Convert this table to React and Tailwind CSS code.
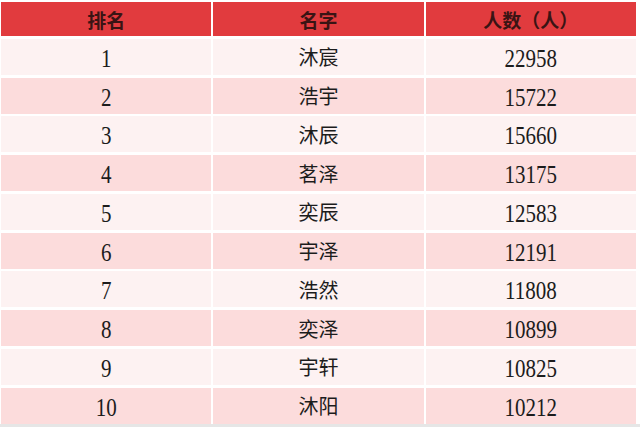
import React from 'react';

const rows = [
    ['1', '沐宸', '22958'],
    ['2', '浩宇', '15722'],
    ['3', '沐辰', '15660'],
    ['4', '茗泽', '13175'],
    ['5', '奕辰', '12583'],
    ['6', '宇泽', '12191'],
    ['7', '浩然', '11808'],
    ['8', '奕泽', '10899'],
    ['9', '宇轩', '10825'],
    ['10', '沐阳', '10212'],
];

const font = { fontFamily: '"Liberation Serif", "Noto Sans CJK SC", serif' };

const Num = ({ v }) => (
    <span className="inline-block text-[21px] leading-none scale-y-[1.22] pt-[3px]">{v}</span>
);

const App = () => {
    return (
        <div className="w-[640px] h-[427px] bg-white overflow-hidden flex flex-col">
            <div className="pt-[2px] pl-[1px] pr-[4px] flex flex-col gap-[2.75px]" style={font}>
                <div className="grid grid-cols-3 gap-[2px] h-[34px]">
                    {['排名', '名字', '人数（人）'].map((h) => (
                        <div key={h} className="bg-[#e13b3e] flex items-center justify-center pt-[4px] text-[19px] leading-none font-bold text-[#3a1414]">
                            {h}
                        </div>
                    ))}
                </div>
                {rows.map((r, i) => (
                    <div key={r[0]} className="grid grid-cols-3 gap-[2px] h-[36px]">
                        {r.map((c, j) => (
                            <div
                                key={j}
                                className={`flex items-center justify-center text-[#1c1c1c] ${i % 2 === 0 ? 'bg-[#fdf2f2]' : 'bg-[#fcdcdc]'}`}
                            >
                                {j === 1 ? (
                                    <span className="text-[20px] leading-none pt-[3px]">{c}</span>
                                ) : (
                                    <Num v={c} />
                                )}
                            </div>
                        ))}
                    </div>
                ))}
            </div>
            <div className="mt-auto h-[3px] bg-[#e6e6e6]"></div>
        </div>
    );
};

export default App;
